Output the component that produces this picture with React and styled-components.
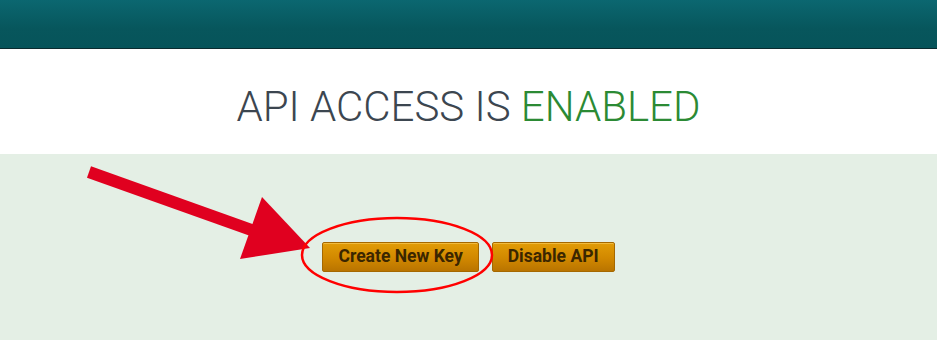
import React from 'react';
import styled, { createGlobalStyle } from 'styled-components';

const GlobalStyle = createGlobalStyle`
  html, body {
    margin: 0;
    padding: 0;
    background: #e4efe5;
    font-family: Roboto, 'Liberation Sans', sans-serif;
  }
`;

const Page = styled.div`
  position: relative;
  width: 937px;
  height: 340px;
  display: flex;
  flex-direction: column;
  overflow: hidden;
`;

const TopBar = styled.div`
  height: 48px;
  background: linear-gradient(#0b6770, #07565c 60%, #06545a);
  border-bottom: 1px solid #0a2b2f;
`;

const TitleBox = styled.div`
  background: #ffffff;
  height: 105px;
  padding-top: 37px;
  box-sizing: border-box;
  text-align: center;
`;

const Title = styled.h1`
  margin: 0;
  font-size: 42px;
  line-height: 1;
  font-weight: 300;
  color: #3c4650;

  span {
    color: #2b8a34;
  }
`;

const ActionBox = styled.div`
  flex: 1;
  background: #e4efe5;
  display: flex;
  justify-content: center;
  align-items: flex-start;
  gap: 13px;
  padding-top: 88px;
`;

const Button = styled.button`
  height: 30px;
  padding: 0 15px;
  border: 1px solid #a56800;
  border-radius: 2px;
  background: linear-gradient(#e29c06, #d18800 55%, #b97400);
  color: #3a2600;
  font-family: Roboto, 'Liberation Sans', sans-serif;
  font-size: 17.5px;
  font-weight: 700;
  line-height: 1;
  box-shadow: inset 0 1px 0 rgba(255, 220, 120, 0.5);
  cursor: pointer;
`;

const Overlay = styled.svg`
  position: absolute;
  left: 0;
  top: 0;
  pointer-events: none;
`;

export default function App() {
  return (
    <>
      <GlobalStyle />
      <Page>
        <TopBar />
        <TitleBox>
          <Title>
            API ACCESS IS <span>ENABLED</span>
          </Title>
        </TitleBox>
        <ActionBox>
          <Button>Create New Key</Button>
          <Button>Disable API</Button>
        </ActionBox>
        <Overlay width="937" height="340" viewBox="0 0 937 340">
          <line x1="89" y1="172" x2="268" y2="236" stroke="#e0001f" strokeWidth="12" />
          <polygon points="262,197 240,259 310,248" fill="#e0001f" />
          <ellipse
            cx="397"
            cy="255"
            rx="95"
            ry="37"
            fill="none"
            stroke="#ff0000"
            strokeWidth="2.5"
          />
        </Overlay>
      </Page>
    </>
  );
}
